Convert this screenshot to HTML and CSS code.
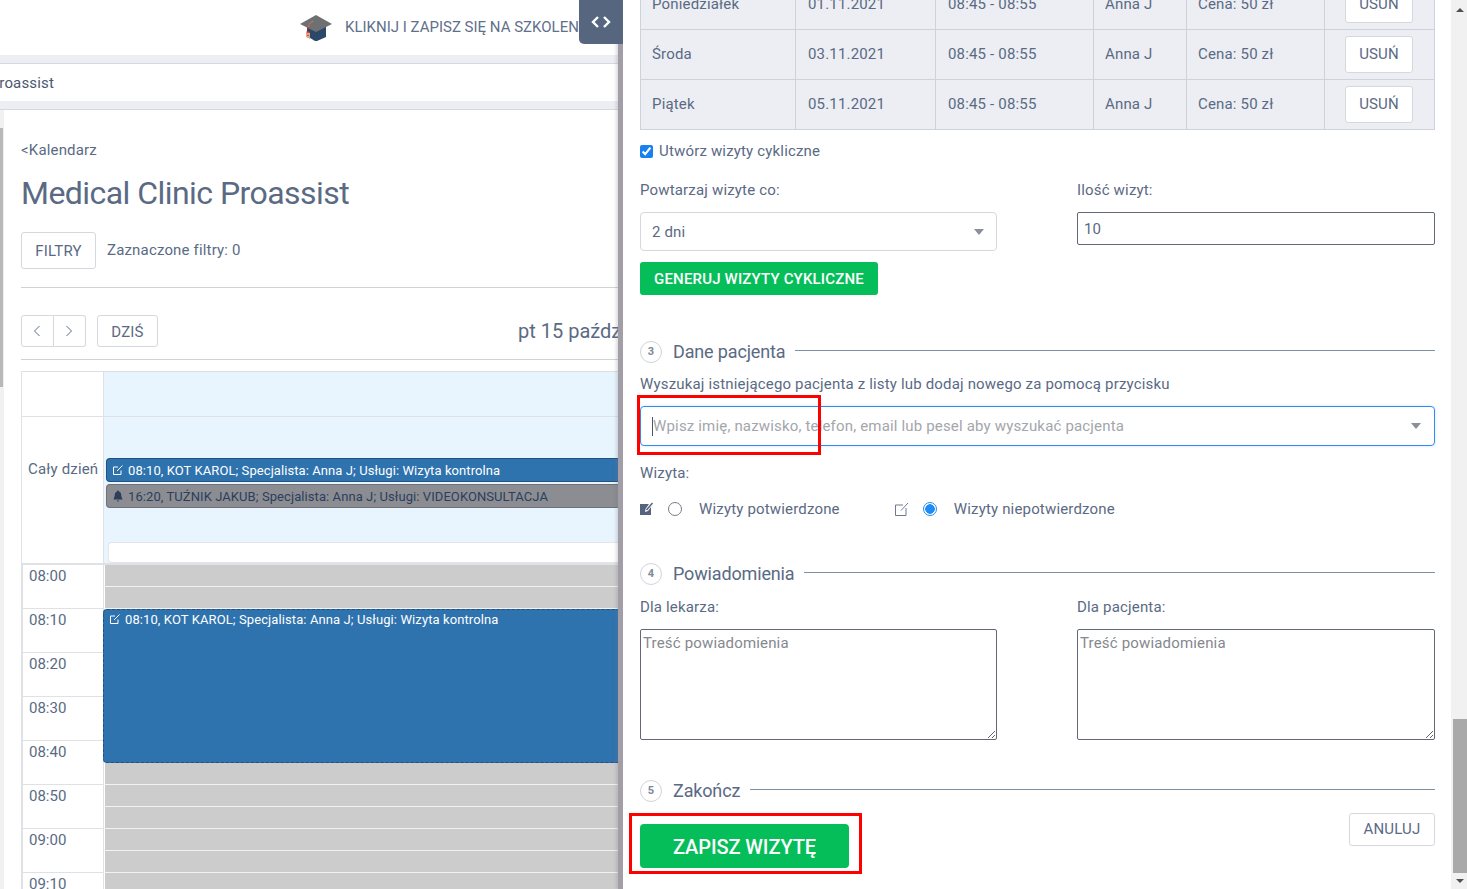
FILE: index.html
```html
<!DOCTYPE html>
<html lang="pl">
<head>
<meta charset="utf-8">
<title>Medical Clinic Proassist</title>
<link rel="stylesheet" href="styles.css">
</head>
<body>
<div class="app">
  <main class="pane">
    <header class="topbar">
      <svg class="cap" viewBox="0 0 34 28" width="34" height="28">
        <path d="M8 12v10l8 5 2 0 9-4V12z" fill="#2a4868"/>
        <path d="M7 17l4 2v6l-4-2z" fill="#e0a58a"/>
        <path d="M17 1L1 10l16 8 16-8z" fill="#6f7072"/>
        <path d="M9 13l3-5 3-1" stroke="#e2775f" stroke-width="1" fill="none" stroke-dasharray="2 1"/>
        <path d="M9 13v9" stroke="#d9262a" stroke-width="1.4" stroke-dasharray="2 2"/>
      </svg>
      <span class="promo">KLIKNIJ I ZAPISZ SIĘ NA SZKOLENIE</span>
    </header>
    <div class="band"></div>
    <nav class="crumb"><span class="crumb-text">Medical Clinic Proassist</span></nav>
    <div class="band"></div>
    <div class="body">
      <div class="rail"><div class="rail-thumb"></div></div>
      <section class="content">
        <a class="back">&lt;Kalendarz</a>
        <h1 class="title">Medical Clinic Proassist</h1>
        <div class="filters">
          <button class="btn btn-filter">FILTRY</button>
          <span class="filters-note">Zaznaczone filtry: 0</span>
        </div>
        <div class="toolbar">
          <div class="btn-group">
            <button class="btn btn-arrow"><svg viewBox="0 0 8 12" width="8" height="12"><path d="M6.5 1L1.5 6l5 5" fill="none" stroke="#5b6b84"/></svg></button>
            <button class="btn btn-arrow"><svg viewBox="0 0 8 12" width="8" height="12"><path d="M1.5 1l5 5-5 5" fill="none" stroke="#5b6b84"/></svg></button>
          </div>
          <button class="btn btn-today">DZIŚ</button>
          <span class="cal-date">pt 15 paźdz</span>
        </div>
        <div class="calendar">
          <div class="cal-row cal-head"><div class="cal-time"></div><div class="cal-day"></div></div>
          <div class="cal-row cal-allday">
            <div class="cal-time allday-label">Cały dzień</div>
            <div class="cal-day allday-cell">
              <div class="pill pill-blue">
                <svg class="ev-icon" viewBox="0 0 12 12" width="12" height="12"><path d="M9 6.5V10.5H1.5V3H6M5 7l5.500-5.500" fill="none" stroke="currentColor"/></svg>
                08:10, KOT KAROL; Specjalista: Anna J; Usługi: Wizyta kontrolna
              </div>
              <div class="pill pill-gray">
                <svg class="ev-icon" viewBox="0 0 12 12" width="12" height="12"><path d="M6 0.500a1 1 0 0 1 1 1c2 .5 2.300 2.500 2.300 4.500l1.200 3.500h-9L2.700 6C2.700 4 3 2 5 1.500a1 1 0 0 1 1-1zM4.800 10.500h2.400L6 12z" fill="currentColor"/></svg>
                16:20, TUŹNIK JAKUB; Specjalista: Anna J; Usługi: VIDEOKONSULTACJA
              </div>
              <div class="allday-input"></div>
            </div>
          </div>
          <div class="slots">
            <div class="slot-row"><div class="slot-time">08:00</div><div class="slot-day"><i></i><i></i></div></div>
            <div class="slot-row"><div class="slot-time">08:10</div><div class="slot-day"><i></i><i></i></div></div>
            <div class="slot-row"><div class="slot-time">08:20</div><div class="slot-day"><i></i><i></i></div></div>
            <div class="slot-row"><div class="slot-time">08:30</div><div class="slot-day"><i></i><i></i></div></div>
            <div class="slot-row"><div class="slot-time">08:40</div><div class="slot-day"><i></i><i></i></div></div>
            <div class="slot-row"><div class="slot-time">08:50</div><div class="slot-day"><i></i><i></i></div></div>
            <div class="slot-row"><div class="slot-time">09:00</div><div class="slot-day"><i></i><i></i></div></div>
            <div class="slot-row"><div class="slot-time">09:10</div><div class="slot-day"><i></i><i></i></div></div>
            <div class="event">
              <svg class="ev-icon" viewBox="0 0 12 12" width="12" height="12"><path d="M9 6.500V10.500H1.500V3H6M5 7l5.500-5.500" fill="none" stroke="currentColor"/></svg>
              08:10, KOT KAROL; Specjalista: Anna J; Usługi: Wizyta kontrolna
            </div>
          </div>
        </div>
      </section>
    </div>
    <button class="toggle"><svg viewBox="0 0 20 12" width="20" height="12"><path d="M7 1L2 6l5 5M13 1l5 5-5 5" fill="none" stroke="#fff" stroke-width="2.400"/></svg></button>
  </main>

  <aside class="drawer">
    <div class="form">
      <table class="visits">
        <tr><td>Poniedziałek</td><td>01.11.2021</td><td>08:45 - 08:55</td><td>Anna J</td><td>Cena: 50 zł</td><td class="act"><button class="btn btn-del">USUŃ</button></td></tr>
        <tr><td>Środa</td><td>03.11.2021</td><td>08:45 - 08:55</td><td>Anna J</td><td>Cena: 50 zł</td><td class="act"><button class="btn btn-del">USUŃ</button></td></tr>
        <tr><td>Piątek</td><td>05.11.2021</td><td>08:45 - 08:55</td><td>Anna J</td><td>Cena: 50 zł</td><td class="act"><button class="btn btn-del">USUŃ</button></td></tr>
      </table>

      <label class="check-row"><input class="check" type="checkbox" checked>Utwórz wizyty cykliczne</label>

      <div class="two-col repeat">
        <div><div class="label">Powtarzaj wizyte co:</div>
          <div class="select">2 dni<span class="tri"></span></div></div>
        <div><div class="label">Ilość wizyt:</div>
          <div class="input">10</div></div>
      </div>
      <button class="btn-green">GENERUJ WIZYTY CYKLICZNE</button>

      <div class="step step-3"><span class="num">3</span><span class="step-title">Dane pacjenta</span><span class="step-line"></span></div>
      <p class="help">Wyszukaj istniejącego pacjenta z listy lub dodaj nowego za pomocą przycisku</p>
      <div class="search">
        <span class="caret"></span><span class="placeholder">Wpisz imię, nazwisko, telefon, email lub pesel aby wyszukać pacjenta</span><span class="tri"></span>
        <span class="mark mark-search"></span>
      </div>
      <div class="label visit-label">Wizyta:</div>
      <div class="radios">
        <svg class="r-icon" viewBox="0 0 15 14" width="15" height="14"><path d="M0 2h9L5.500 7l-.5 3 3-1 3-4v8H0z" fill="#54647e"/><path d="M6.500 8l6-7" stroke="#54647e" stroke-width="1.500"/></svg>
        <span class="radio"></span>
        <span class="r-text">Wizyty potwierdzone</span>
        <svg class="r-icon r-icon-2" viewBox="0 0 15 14" width="15" height="14"><path d="M11 6v7.500H.5V3H8M6 8.500l7-7.500" fill="none" stroke="#6b7a90"/></svg>
        <span class="radio radio-on"></span>
        <span class="r-text">Wizyty niepotwierdzone</span>
      </div>

      <div class="step step-4"><span class="num">4</span><span class="step-title">Powiadomienia</span><span class="step-line"></span></div>
      <div class="two-col notes">
        <div><div class="label">Dla lekarza:</div><textarea class="area" placeholder="Treść powiadomienia"></textarea></div>
        <div><div class="label">Dla pacjenta:</div><textarea class="area" placeholder="Treść powiadomienia"></textarea></div>
      </div>

      <div class="step step-5"><span class="num">5</span><span class="step-title">Zakończ</span><span class="step-line"></span></div>
      <div class="finish">
        <button class="btn-save">ZAPISZ WIZYTĘ<span class="mark mark-save"></span></button>
        <button class="btn btn-cancel">ANULUJ</button>
      </div>
    </div>
    <div class="scrollbar">
      <span class="sb-up"></span>
      <span class="sb-thumb"></span>
      <span class="sb-down"></span>
    </div>
  </aside>
</div>
</body>
</html>
```

FILE: styles.css
```css
* { box-sizing: border-box; }
html, body { margin: 0; height: 100%; overflow: hidden; }
body { font-family: Roboto, "Liberation Sans", sans-serif; font-size: 15px; letter-spacing: .17px; color: #5a6a84; background: #fff; }
button { font-family: inherit; letter-spacing: inherit; cursor: pointer; }
.app { display: flex; width: 1467px; height: 889px; overflow: hidden; }

/* left page */
.pane { position: relative; width: 623px; flex: none; overflow: hidden; }
.topbar { height: 55px; display: flex; align-items: center; padding-left: 299px; white-space: nowrap; }
.cap { flex: none; margin-top: 1px; }
.promo { margin-left: 12px; font-size: 15px; letter-spacing: 0; color: #5f708a; margin-top: -2px; }
.band { height: 9px; background: #eceef3; border-bottom: 1px solid #d6d8dc; }
.crumb { height: 37px; display: flex; align-items: center; color: #4c5870; white-space: nowrap; }
.crumb-text { margin-left: -110px; font-size: 15px; }
.body { display: flex; height: 779px; }
.rail { width: 4px; flex: none; background: #f1f1f1; padding-top: 18px; }
.rail-thumb { width: 3px; height: 259px; background: #b9b9b9; }
.content { flex: 1; min-width: 0; padding: 0 0 0 17px; }
.back { display: block; margin-top: 31px; height: 18px; line-height: 18px; font-size: 15px; color: #5a6a84; }
.title { margin: 14px 0 0; font-size: 32px; letter-spacing: -.55px; line-height: 40px; font-weight: 400; color: #5a6a84; white-space: nowrap; }
.filters { display: flex; align-items: center; gap: 11px; margin-top: 19px; padding-bottom: 18px; border-bottom: 1px solid #cfd2d6; }
.filters-note { font-size: 15px; margin-top: -1px; }
.btn { background: #fff; border: 1px solid #d5d8dd; border-radius: 3px; color: #5a6a84; font-size: 15px; padding: 0; }
.btn-filter { width: 75px; height: 37px; }
.toolbar { display: flex; align-items: center; margin-top: 27px; padding-bottom: 12px; border-bottom: 1px solid #cfd2d6; height: 45px; white-space: nowrap; }
.btn-group { display: flex; width: 65px; height: 32px; }
.btn-arrow { width: 33px; height: 32px; display: flex; align-items: center; justify-content: center; }
.btn-arrow:first-child { border-radius: 3px 0 0 3px; }
.btn-arrow:last-child { border-radius: 0 3px 3px 0; border-left: 0; }
.btn-today { width: 61px; height: 32px; margin-left: 11px; padding-top: 2px; }
.cal-date { margin-left: 360px; font-size: 20px; letter-spacing: 0; color: #5a6a84; }
.calendar { margin-top: 11px; border-top: 1px solid #dcdee2; border-left: 1px solid #e0e2e5; }
.cal-row { display: grid; grid-template-columns: 82px 1fr; }
.cal-head { height: 45px; border-bottom: 1px solid #dfe1e4; }
.cal-time { border-right: 1px solid #dfe1e4; }
.cal-day { background: #e8f5fe; }
.cal-allday { height: 148px; border-bottom: 2px solid #dfe1e4; }
.allday-label { padding: 43px 0 0 6px; font-size: 15px; white-space: nowrap; overflow: hidden; line-height: 18px; }
.allday-cell { padding: 41px 0 0 2px; overflow: hidden; }
.pill { height: 24px; margin-bottom: 2px; padding-left: 5px; display: flex; align-items: center; gap: 4px; font-size: 13px; letter-spacing: .08px; border-radius: 4px 0 0 4px; white-space: nowrap; }
.pill-blue { background: #2e72ae; color: #fff; border: 1px solid #24507d; border-right: 0; }
.pill-gray { background: #8b8d92; color: #2c3e5c; border: 1px solid #6f7177; border-right: 0; }
.ev-icon { flex: none; }
.allday-input { height: 21px; margin: 34px 0 0 2px; background: #fff; border: 1px solid #e3e5e8; border-right: 0; border-radius: 4px 0 0 4px; }
.slots { position: relative; }
.slot-row { display: grid; grid-template-columns: 82px 1fr; height: 44px; }
.slot-time { border-left: 1px solid #dfe1e4; border-right: 1px solid #dfe1e4; border-bottom: 1px solid #dfe1e4; padding: 2px 0 0 6px; font-size: 15px; letter-spacing: 0; line-height: 18px; }
.slot-day { display: flex; flex-direction: column; padding-left: 1px; }
.slot-day i { display: block; height: 22px; background: #cccccc; border-bottom: 1px solid #f2f2f2; }
.event { position: absolute; left: 81px; right: 0; top: 44px; height: 154px; background: #2e72ae; color: #fff; border: 1px dashed #24507d; border-right: 0; border-radius: 4px 0 0 4px; font-size: 13px; letter-spacing: .1px; padding: 1px 0 0 5px; display: flex; align-items: flex-start; gap: 4px; white-space: nowrap; line-height: 17px; }
.event .ev-icon { margin-top: 2px; }
.toggle { position: absolute; top: 0; right: 0; width: 44px; height: 44px; background: #56667f; border: 0; border-radius: 0 0 0 5px; padding: 0; display: flex; align-items: center; justify-content: center; z-index: 3; }

/* right drawer */
.drawer { position: relative; flex: 1; min-width: 0; display: flex; box-shadow: -5px 0 0 #a29ea8, -7px 0 3px rgba(120,120,130,.25); z-index: 2; background: #fff; }
.form { width: 828px; flex: none; padding: 0 16px 0 17px; }
.visits { width: 795px; margin-top: -21px; border-collapse: collapse; table-layout: fixed; background: #eceef3; font-size: 15px; }
.visits td { height: 50px; padding: 0 0 2px 11px; border: 1px solid #ccd3da; white-space: nowrap; }
.visits td:nth-child(1) { width: 155px; }
.visits td:nth-child(2) { width: 140px; padding-left: 12px; }
.visits td:nth-child(3) { width: 158px; padding-left: 12px; }
.visits td:nth-child(4) { width: 93px; }
.visits td:nth-child(5) { width: 138px; }
.visits td.act { padding: 0 0 0 20px; }
.btn-del { width: 68px; height: 37px; display: block; padding-bottom: 2px; }
.check-row { display: flex; align-items: center; gap: 6px; margin-top: 13px; height: 16px; font-size: 15px; }
.check { width: 13px; height: 13px; margin: 0; accent-color: #1a80f0; }
.two-col { display: grid; grid-template-columns: 357px 358px; column-gap: 80px; }
.label { font-size: 15px; line-height: 18px; }
.repeat { margin-top: 22px; }
.repeat .label { margin-bottom: 13px; }
.select { position: relative; height: 39px; line-height: 38px; padding-left: 11px; border: 1px solid #d5d8dd; border-radius: 4px; }
.tri { position: absolute; right: 12px; top: 16px; width: 0; height: 0; border-left: 5.500px solid transparent; border-right: 5.500px solid transparent; border-top: 6px solid #8a8f98; }
.input { height: 33px; line-height: 32px; padding-left: 6px; border: 1px solid #62687a; border-radius: 2px; }
.btn-green { display: block; width: 238px; height: 33px; margin-top: 11px; background: #05be5a; color: #fff; border: 0; border-radius: 3px; font-size: 15px; font-weight: 500; padding: 0; }
.step { display: flex; align-items: center; height: 22px; }
.step-3 { margin-top: 45px; }
.step-4 { margin-top: 44px; }
.step-5 { margin-top: 39px; }
.num { width: 22px; height: 22px; flex: none; margin-top: 2px; border: 1px solid #d0d4da; border-radius: 50%; text-align: center; font-size: 11px; font-weight: 700; letter-spacing: 0; line-height: 20px; color: #7c8798; }
.step-title { margin-left: 11px; font-size: 18px; letter-spacing: -.15px; color: #5a6a84; white-space: nowrap; }
.step-line { flex: 1; height: 1px; margin: -1px 0 0 10px; background: #7d8fa3; }
.help { margin: 13px 0 0; font-size: 15px; line-height: 18px; }
.search { position: relative; height: 40px; margin-top: 13px; padding-left: 11px; display: flex; align-items: center; border: 1px solid #2d8cf0; border-radius: 4px; box-shadow: 0 0 3px rgba(45,140,240,.25); }
.caret { width: 1px; height: 19px; background: #4a5568; flex: none; }
.placeholder { color: #a3a6ab; font-size: 15px; }
.search .tri { top: 16px; right: 13px; }
.mark { position: absolute; border: 3px solid #f00; pointer-events: none; }
.mark-search { left: -4px; top: -12px; width: 184px; height: 60px; }
.visit-label { margin-top: 18px; }
.radios { display: flex; align-items: center; height: 18px; margin-top: 18px; }
.r-icon { flex: none; }
.r-icon-2 { margin-left: 55px; }
.radio { width: 14px; height: 14px; flex: none; margin: 0 17px 0 13px; border: 1px solid #767c88; border-radius: 50%; }
.radio-on { border-color: #1f8cf5; background: radial-gradient(circle, #1f8cf5 0 4.500px, #fff 5px); }
.r-text { font-size: 15px; white-space: nowrap; }
.notes { margin-top: 14px; }
.notes .label { margin-bottom: 13px; }
.area { display: block; width: 100%; height: 111px; border: 1px solid #62687a; border-radius: 2px; padding: 4px 2px; font-family: inherit; font-size: 15px; letter-spacing: inherit; line-height: 18px; color: #5a6a84; margin: 0; }
.area::placeholder { color: #85888e; opacity: 1; }
.finish { display: flex; justify-content: space-between; align-items: flex-start; margin-top: 12px; }
.btn-save { position: relative; width: 209px; height: 44px; margin-top: 11px; background: #05be5a; color: #fff; border: 0; border-radius: 4px; font-size: 20px; font-weight: 500; letter-spacing: -.1px; padding: 2px 0 0; }
.mark-save { left: -11px; top: -11px; width: 233px; height: 61px; }
.btn-cancel { width: 86px; height: 33px; padding-bottom: 2px; }

/* drawer scrollbar */
.scrollbar { position: relative; flex: 1; background: #f1f1f1; display: flex; flex-direction: column; align-items: center; padding: 10px 0 0 2px; }
.sb-up { width: 0; height: 0; border-left: 4px solid transparent; border-right: 4px solid transparent; border-bottom: 4px solid #505050; margin-top: -2px; }
.sb-thumb { width: 100%; height: 154px; margin: 707px 0 0; background: #a9a9a9; }
.sb-down { width: 0; height: 0; margin-top: 6px; border-left: 4px solid transparent; border-right: 4px solid transparent; border-top: 4px solid #505050; }
```
